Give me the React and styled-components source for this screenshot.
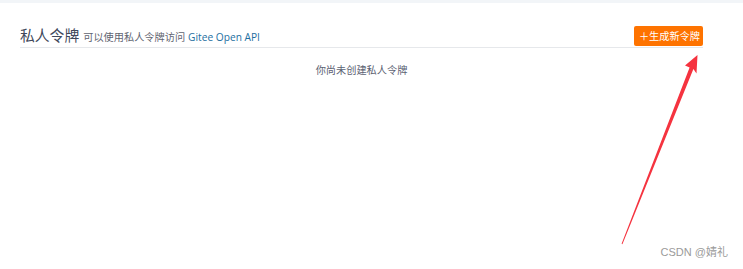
import React from 'react';
import styled, { createGlobalStyle } from 'styled-components';

const GlobalStyle = createGlobalStyle`
  html, body {
    margin: 0;
    padding: 0;
    background: #fff;
  }
  body {
    font-family: "Open Sans", "Noto Sans CJK SC", sans-serif;
    width: 743px;
    height: 269px;
    overflow: hidden;
  }
`;

const Page = styled.div`
  position: relative;
  width: 743px;
  height: 269px;
  border-top: 3px solid #f2f5f8;
  box-sizing: border-box;
`;

const Section = styled.section`
  width: 683px;
  margin-left: 20px;
  padding-top: 21px;
`;

const Header = styled.div`
  display: flex;
  align-items: flex-end;
  justify-content: space-between;
  padding-bottom: 1px;
  border-bottom: 1px solid #e6e8eb;
`;

const TitleGroup = styled.div`
  display: flex;
  align-items: baseline;
  gap: 4px;
`;

const Title = styled.h3`
  margin: 0;
  font-size: 14.8px;
  font-weight: 400;
  line-height: 22px;
  color: #40485b;
  font-family: "Noto Sans CJK SC", sans-serif;
`;

const Subtitle = styled.span`
  font-size: 10.2px;
  color: #5f6571;
`;

const Link = styled.a`
  color: #1e6f9f;
  text-decoration: none;
  margin-left: 3px;
`;

const CreateButton = styled.button`
  border: none;
  border-radius: 2px;
  background: #fe7300;
  color: #fff;
  font-family: "Noto Sans CJK SC", sans-serif;
  font-size: 10.2px;
  line-height: 20px;
  height: 20px;
  padding: 0 3px 0 5px;
  cursor: pointer;
`;

const Empty = styled.p`
  margin: 14px 0 0;
  text-align: center;
  font-size: 10.2px;
  color: #5c6273;
  font-family: "Noto Sans CJK SC", sans-serif;
`;

const Arrow = styled.svg`
  position: absolute;
  left: 0;
  top: 0;
  pointer-events: none;
`;

const Watermark = styled.span`
  position: absolute;
  right: 15px;
  bottom: 10px;
  font-size: 11px;
  color: #9a9a9a;
  font-family: "Liberation Sans", "Noto Sans CJK SC", sans-serif;
`;

export default function App() {
  return (
    <>
      <GlobalStyle />
      <Page>
        <Section>
          <Header>
            <TitleGroup>
              <Title>私人令牌</Title>
              <Subtitle>
                可以使用私人令牌访问<Link href="#">Gitee Open API</Link>
              </Subtitle>
            </TitleGroup>
            <CreateButton>＋生成新令牌</CreateButton>
          </Header>
          <Empty>你尚未创建私人令牌</Empty>
        </Section>
        <Arrow width="743" height="269" viewBox="0 0 743 269">
          <polygon
            points="697.5,52 696.5,70.5 693.4,66 622.4,241.2 621.6,240.8 689.6,64.4 685,62.6"
            fill="#f5333f"
          />
        </Arrow>
        <Watermark>CSDN @婧礼</Watermark>
      </Page>
    </>
  );
}
